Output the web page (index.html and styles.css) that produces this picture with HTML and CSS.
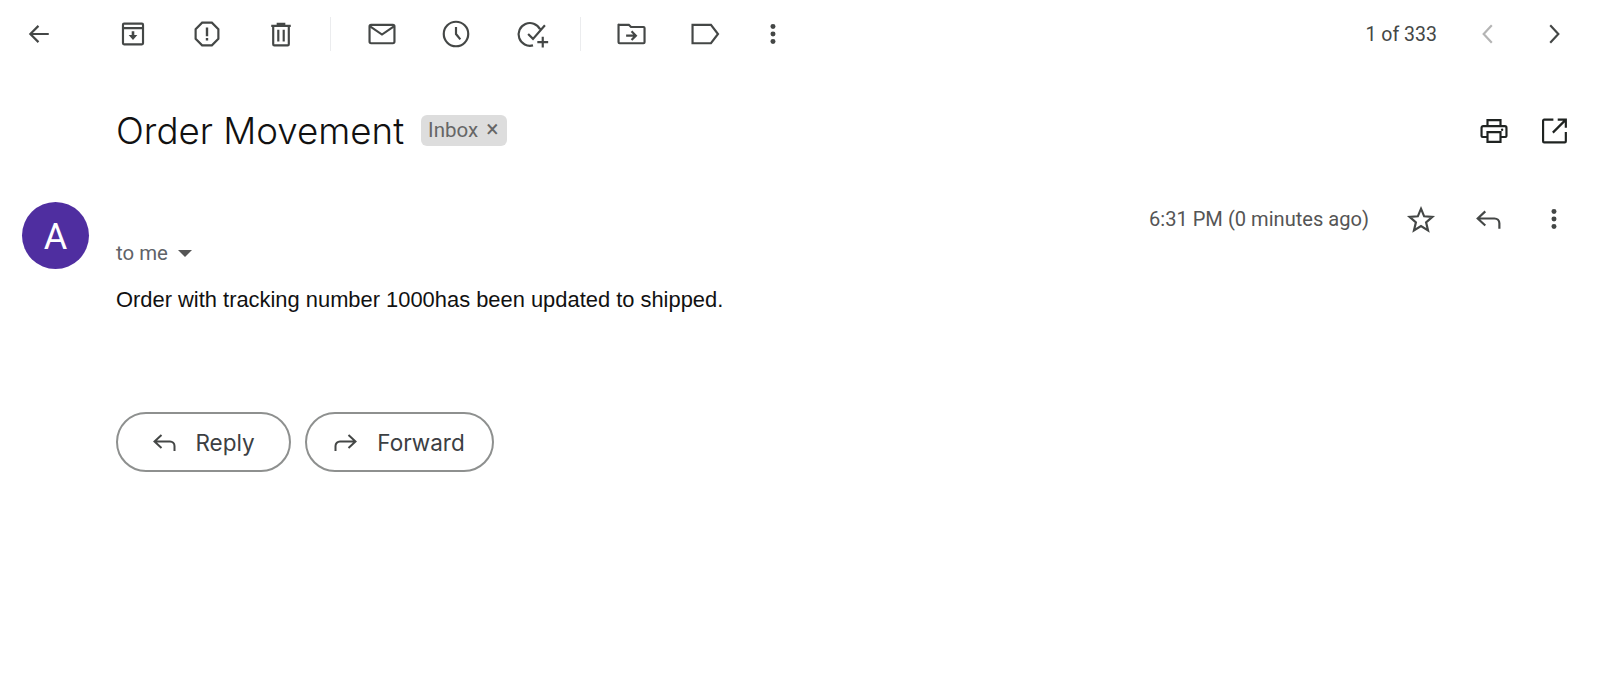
FILE: index.html
```html
<!DOCTYPE html>
<html lang="en">
<head>
<meta charset="utf-8">
<title>Order Movement</title>
<link rel="stylesheet" href="styles.css">
</head>
<body>
<div class="toolbar">
  <button class="tb tb-back"><svg class="ic" viewBox="0 0 24 24"><path d="M21 12H4M11.500 4.500L4 12l7.500 7.500"/></svg></button>
  <div class="group">
    <button class="tb"><svg class="ic" viewBox="0 0 24 24"><path d="M2.750 6.500V20.600a1 1 0 0 0 1 1h16.500a1 1 0 0 0 1-1V6.500M2.750 6.500V3.400a1 1 0 0 1 1-1h16.500a1 1 0 0 1 1 1v3.100zM2.750 6.500h18.500"/><path class="f" d="M10.800 9.500h2.400v3.500h2.800L12 17.500l-4-4.500h2.800z"/></svg></button>
    <button class="tb"><svg class="ic" viewBox="0 0 24 24"><path d="M7.500 1.500h9l6 6v9l-6 6h-9l-6-6v-9z"/><path class="f" d="M10.900 6h2.200v8h-2.200zM10.900 15.700h2.200v2.200h-2.200z"/></svg></button>
    <button class="tb"><svg class="ic" viewBox="0 0 24 24"><path d="M3 4.500h18M9 4.500V2.500h6v2M4.800 4.500v17a1 1 0 0 0 1 1h12.400a1 1 0 0 0 1-1v-17M9.500 8v11M14.500 8v11"/></svg></button>
  </div>
  <span class="sep sep-a"></span>
  <div class="group group-b">
    <button class="tb"><svg class="ic" viewBox="0 0 24 24"><rect x="0.500" y="3.500" width="23" height="17" rx="1.500"/><path d="M1 5l11 7.500L23 5"/></svg></button>
    <button class="tb"><svg class="ic" viewBox="0 0 24 24"><circle cx="12" cy="12" r="11.300"/><path d="M12 5.500V12l4 5"/></svg></button>
    <button class="tb tb-task"><svg class="ic" viewBox="0 0 24 24"><path d="M18.500 7.500A10.500 10.500 0 1 0 12 22.500M7.500 12l4.500 4.500L23 4"/><path d="M21 14.500v10M16 19.500h10"/></svg></button>
  </div>
  <span class="sep sep-b"></span>
  <div class="group">
    <button class="tb"><svg class="ic" viewBox="0 0 24 24"><path d="M0.500 3.500v16a1 1 0 0 0 1 1h22a1 1 0 0 0 1-1V6.500a1 1 0 0 0-1-1H12l-2-2H1a.5.5 0 0 0-.5 0z"/><path d="M7.500 13.500h9M12.500 9.500l4 4-4 4"/></svg></button>
    <button class="tb"><svg class="ic" viewBox="0 0 24 24"><path d="M0.500 3.500h17l6.500 8.500-6.500 8.500h-17z"/></svg></button>
    <button class="tb tb-more"><svg class="ic" viewBox="0 0 24 24"><circle class="f" cx="12" cy="5" r="2.300"/><circle class="f" cx="12" cy="12" r="2.300"/><circle class="f" cx="12" cy="19" r="2.300"/></svg></button>
  </div>
  <div class="pager">
    <span class="count">1 of 333</span>
    <button class="tb tb-prev"><svg class="ic dim" viewBox="0 0 24 24"><path d="M15.500 4l-7.500 8 7.500 8"/></svg></button>
    <button class="tb tb-next"><svg class="ic" viewBox="0 0 24 24"><path d="M8.500 4l7.500 8-7.500 8"/></svg></button>
  </div>
</div>

<div class="subject">
  <h1>Order Movement</h1>
  <span class="chip">Inbox <span class="x">×</span></span>
  <div class="subject-actions">
    <button class="tb"><svg class="ic dark" viewBox="0 0 24 24"><path d="M6 7.500V2h12v5.500M6 17.500H1.500a1 1 0 0 1-1-1V9A1.500 1.500 0 0 1 2 7.500h20A1.500 1.500 0 0 1 23.500 9v7.500a1 1 0 0 1-1 1H18"/><path d="M6 13h12v9H6z"/><circle class="f" cx="19.500" cy="10.800" r="1.100"/></svg></button>
    <button class="tb"><svg class="ic dark" viewBox="0 0 24 24"><path d="M10.500 1.500H2a1 1 0 0 0-1 1v19a1 1 0 0 0 1 1h19a1 1 0 0 0 1-1V13M14.500 1.500h7.500v7.500M22 1.500L10 13.500"/></svg></button>
  </div>
</div>

<div class="message">
  <div class="avatar">A</div>
  <div class="msg-main">
    <div class="meta">
      <span class="time">6:31 PM (0 minutes ago)</span>
      <button class="tb tb-star"><svg class="ic" viewBox="0 0 24 24"><path d="M12 2.500l2.900 7 7.600.6-5.800 5 1.800 7.400L12 18.500l-6.500 4 1.800-7.400-5.800-5 7.600-.6z"/></svg></button>
      <button class="tb tb-rep"><svg class="ic" viewBox="0 0 24 24"><path d="M9.500 5L2.500 11.500l7 6.500M2.500 11.500H18a4.500 4.500 0 0 1 4.500 4.500v5"/></svg></button>
      <button class="tb tb-dots"><svg class="ic" viewBox="0 0 24 24"><circle class="f" cx="12" cy="5" r="2.300"/><circle class="f" cx="12" cy="12" r="2.300"/><circle class="f" cx="12" cy="19" r="2.300"/></svg></button>
    </div>
    <div class="to">to me <span class="caret"></span></div>
    <p class="body-text">Order with tracking number 1000has been updated to shipped.</p>
    <div class="actions">
      <button class="pill pill-reply"><svg class="ic pill-ic" viewBox="0 0 24 24"><path d="M9.500 5L2.500 11.500l7 6.500M2.500 11.500H18a4.500 4.500 0 0 1 4.500 4.500v5"/></svg>Reply</button>
      <button class="pill pill-forward"><svg class="ic pill-ic" viewBox="0 0 24 24"><path d="M14.500 5l7 6.500-7 6.500M21.500 11.500H6a4.500 4.500 0 0 0-4.500 4.500v5"/></svg>Forward</button>
    </div>
  </div>
</div>
</body>
</html>
```

FILE: styles.css
```css
* { box-sizing: border-box; }
html, body { margin: 0; height: 685px; overflow: hidden; background: #fff; }
body { font-family: "Roboto", "Liberation Sans", sans-serif; color: #444746; }
button { background: none; border: 0; padding: 0; font: inherit; color: inherit; display: flex; align-items: center; justify-content: center; }
.ic { width: 26px; height: 26px; overflow: visible; fill: none; stroke: #444746; stroke-width: 2; }
.ic .f { fill: #444746; stroke: none; }
.ic.dim { stroke: #b4b4b4; }
.ic.dark { stroke: #1f2321; }
.ic.dark .f { fill: #1f2321; }

.toolbar { height: 68px; display: flex; align-items: center; padding-left: 19px; }
.tb { width: 40px; height: 40px; flex: none; }
.group { display: flex; gap: 34px; }
.tb-back { margin-right: 54px; }
.sep { width: 1px; height: 34px; background: #ebecee; flex: none; }
.sep-a { margin: 0 31px 0 29px; }
.sep-b { margin: 0 30px 0 27px; }
.group-b { gap: 34px; }
.tb-task { margin-left: 3px; }
.tb-more { margin-left: -6px; }
.pager { margin-left: auto; display: flex; align-items: center; }
.count { font-size: 19.500px; color: #444746; margin-right: 31px; }
.tb-prev { margin-right: 26px; }
.tb-next { margin-right: 26px; }

.subject { display: flex; align-items: center; height: 64px; margin-top: 31px; padding-left: 116px; }
h1 { margin: 0; font-family: "Inter", sans-serif; font-weight: 300; font-size: 36.700px; line-height: 48px; color: #111; }
.chip { margin: 0 0 2px 17px; height: 31px; padding: 0 8px 0 7px; background: #dddddd; border-radius: 6px; font-size: 20.500px; line-height: 31px; color: #666; white-space: nowrap; }
.x { font-size: 23px; line-height: 1; margin-left: 3px; }
.subject-actions { margin-left: auto; display: flex; gap: 21px; margin-right: 25px; }

.message { display: flex; margin-top: 3px; padding-left: 22px; }
.avatar { width: 67px; height: 67px; margin-top: 36px; flex: none; border-radius: 50%; background: #4f2ea0; color: #fff; font-size: 36px; font-weight: 400; line-height: 70px; text-align: center; }
.msg-main { flex: 1; padding-left: 27px; }
.meta { display: flex; align-items: center; justify-content: flex-end; height: 40px; margin-top: 33px; }
.time { font-size: 20.100px; color: #555; margin-right: 32px; }
.tb-star { margin-right: 27px; }
.tb-rep { margin-right: 26px; }
.tb-dots { margin-right: 26px; }
.to { font-size: 20.400px; line-height: 24px; color: #5f6368; margin-top: 2px; display: flex; align-items: center; }
.caret { width: 0; height: 0; margin-left: 10px; border: 7px solid transparent; border-top: 7px solid #555; border-bottom: 0; }
.body-text { margin: 23px 0 0; font-family: "Liberation Sans", Arial, sans-serif; font-size: 21.900px; line-height: 24px; color: #111; }
.actions { display: flex; gap: 14px; margin-top: 100px; }
.pill { height: 60px; border: 2px solid #8e908f; border-radius: 30px; font-family: "Inter", sans-serif; font-size: 22.500px; color: #3c4043; }
.pill-reply { width: 175px; }
.pill-forward { width: 189px; }
.pill-ic { width: 24px; height: 24px; margin-right: 19px; }
```
